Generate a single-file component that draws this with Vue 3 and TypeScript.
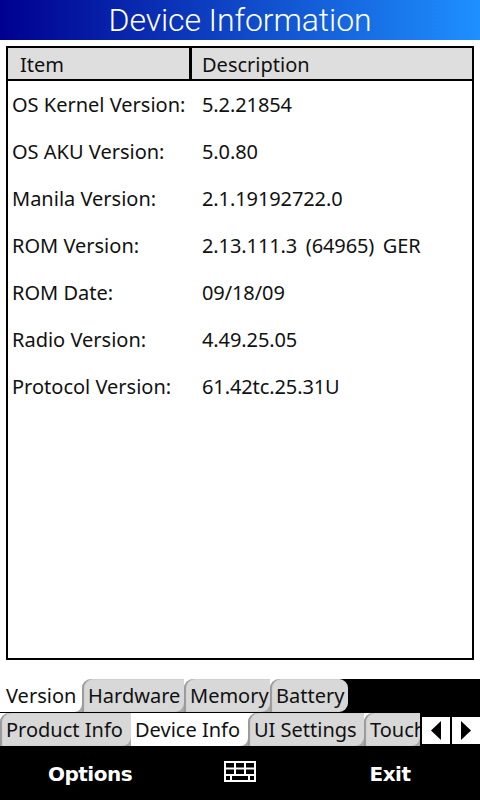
<script setup lang="ts">
const rows = [
  { item: 'OS Kernel Version:', desc: '5.2.21854' },
  { item: 'OS AKU Version:', desc: '5.0.80' },
  { item: 'Manila Version:', desc: '2.1.19192722.0' },
  { item: 'ROM Version:', desc: '2.13.111.3 (64965) GER' },
  { item: 'ROM Date:', desc: '09/18/09' },
  { item: 'Radio Version:', desc: '4.49.25.05' },
  { item: 'Protocol Version:', desc: '61.42tc.25.31U' },
]
const mainTabs = [
  { label: 'Version', active: true, width: 82 },
  { label: 'Hardware', active: false, width: 102 },
  { label: 'Memory', active: false, width: 86 },
  { label: 'Battery', active: false, width: 78 },
]
const subTabs = [
  { label: 'Product Info', active: false, width: 131 },
  { label: 'Device Info', active: true, width: 117 },
  { label: 'UI Settings', active: false, width: 116 },
  { label: 'Touch', active: false, width: 56 },
]
</script>

<template>
  <div class="screen">
    <header class="title">Device Information</header>

    <section class="list-wrap">
      <div class="list">
        <div class="list-head">
          <div class="col-item">Item</div>
          <div class="col-desc">Description</div>
        </div>
        <div class="list-body">
          <div v-for="r in rows" :key="r.item" class="row">
            <span class="row-item">{{ r.item }}</span>
            <span class="row-desc">{{ r.desc }}</span>
          </div>
        </div>
      </div>
    </section>

    <nav class="tabs tabs-main">
      <div
        v-for="t in mainTabs"
        :key="t.label"
        class="tab"
        :class="{ active: t.active }"
        :style="{ width: t.width + 'px' }"
      >{{ t.label }}</div>
    </nav>

    <nav class="tabs tabs-sub">
      <div
        v-for="t in subTabs"
        :key="t.label"
        class="tab"
        :class="{ active: t.active }"
        :style="{ width: t.width + 'px' }"
      >{{ t.label }}</div>
      <div class="arrows">
        <button class="arrow" aria-label="Previous">
          <svg width="10" height="19" viewBox="0 0 10 19"><path d="M10 0V19L0 9.5Z" fill="#000" /></svg>
        </button>
        <button class="arrow" aria-label="Next">
          <svg width="10" height="19" viewBox="0 0 10 19"><path d="M0 0V19L10 9.5Z" fill="#000" /></svg>
        </button>
      </div>
    </nav>

    <footer class="softkeys">
      <span class="softkey">Options</span>
      <svg class="kbd" width="32" height="21" viewBox="0 0 32 21" fill="none" stroke="#fff" stroke-width="2">
        <path d="M1 1H31V20H1Z" />
        <path d="M1 7.5H31M1 14H31M11 1V7.5M21 1V7.5M11 7.5V14M21 7.5V14M7 14V20M25 14V20" />
      </svg>
      <span class="softkey">Exit</span>
    </footer>
  </div>
</template>

<style>
html, body { margin: 0; background: #fff; }
</style>

<style scoped>
.screen {
  width: 480px;
  height: 800px;
  display: flex;
  flex-direction: column;
  overflow: hidden;
  background: #fff;
  font-family: 'Noto Sans', sans-serif;
  color: #111;
}

.title {
  height: 40px;
  flex: none;
  background: linear-gradient(90deg, #00008f 0%, #1e90ff 100%);
  color: #fff;
  font-family: Roboto, 'Liberation Sans', sans-serif;
  font-weight: 300;
  font-size: 32px;
  letter-spacing: -0.1px;
  line-height: 40px;
  text-align: center;
}

.list-wrap {
  height: 639px;
  flex: none;
  padding: 6px 6px 0;
  box-sizing: border-box;
}

.list {
  height: 614px;
  box-sizing: border-box;
  border: 2px solid #000;
}

.list-head {
  display: flex;
  height: 31px;
  background: #dedede;
  border-bottom: 2px solid #000;
  font-size: 20px;
  line-height: 33px;
}

.col-item {
  width: 184px;
  flex: none;
  padding-left: 12px;
  box-sizing: border-box;
  border-right: 3px solid #000;
}

.col-desc { padding-left: 10px; }

.list-body { font-size: 20px; }

.row {
  display: flex;
  height: 47px;
  align-items: center;
}

.row-item { width: 190px; flex: none; padding-left: 4px; box-sizing: border-box; }
.row-desc { padding-left: 4px; letter-spacing: -0.1px; word-spacing: 3.5px; }

.tabs {
  display: flex;
  flex: none;
  font-size: 20px;
}

.tabs-main {
  height: 33px;
  background:
    linear-gradient(#fff 0 50%, #a8a8a8 50%) no-repeat 0 0 / 340px 100%,
    #000;
}

.tabs-sub {
  height: 34px;
  background: linear-gradient(#fff 0 50%, #a8a8a8 50%);
  border-top: 1px solid #000;
  box-sizing: border-box;
}

.tab {
  flex: none;
  box-sizing: border-box;
  background: #d8d8d8;
  padding-left: 6px;
  height: 33px;
  line-height: 33px;
  border-radius: 9px 0 9px 0;
  box-shadow: inset 2px 0 1px #999;
  white-space: nowrap;
  overflow: hidden;
}

.tab.active {
  background: #fff;
  box-shadow: none;
  border-radius: 0 0 8px 0;
  padding-left: 4px;
}

.tabs-main .tab.active { padding-left: 6px; }

.tabs-main .tab:last-child {
  border-radius: 9px 9px 9px 0;
}

.tabs-sub .tab:last-child {
  border-radius: 9px 0 0 0;
}

.arrows {
  flex: 1;
  display: flex;
  gap: 2px;
  align-items: stretch;
  background: #000;
  padding: 4px 0 2px 2px;
}

.arrow {
  flex: 1;
  padding: 0;
  border: 0;
  background: #fff;
  display: flex;
  align-items: center;
  justify-content: center;
}

.softkeys {
  flex: 1;
  display: grid;
  grid-template-columns: 180px 1fr 180px;
  align-items: center;
  justify-items: center;
  background: #000;
  color: #fff;
  font-family: 'DejaVu Sans', sans-serif;
  font-size: 20px;
  font-weight: 700;
  letter-spacing: -0.5px;
  padding-top: 2px;
}

.kbd { margin-top: -6px; }
</style>
